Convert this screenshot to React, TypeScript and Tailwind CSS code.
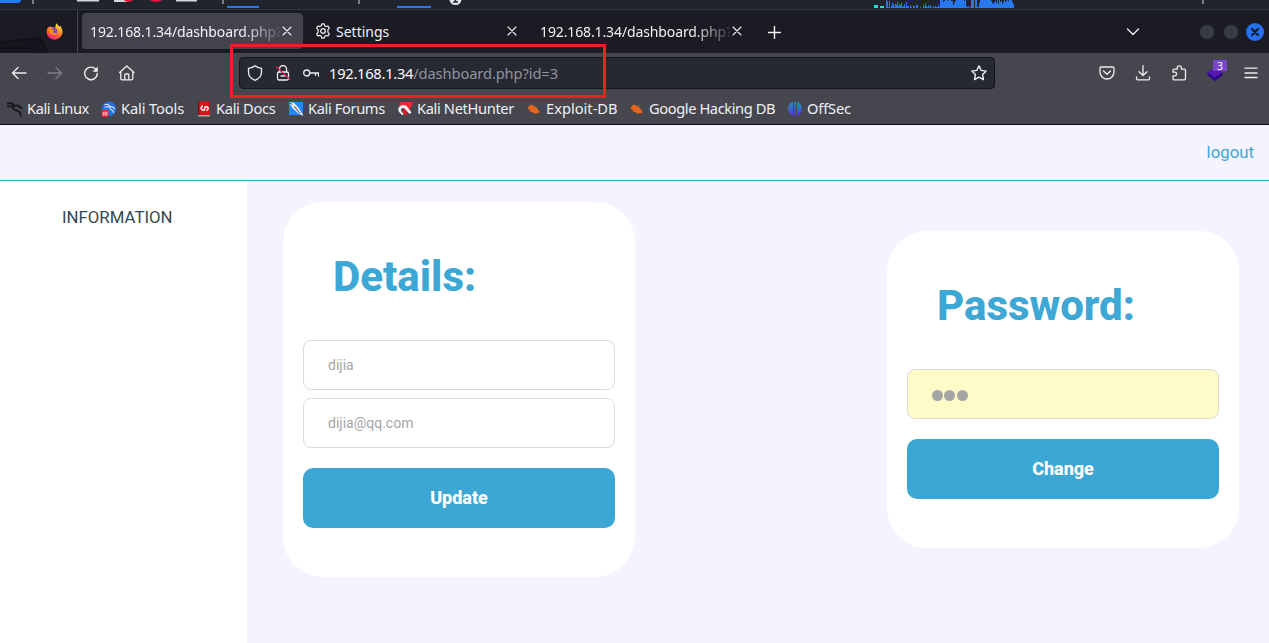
import type { ReactNode } from "react";

const line = {
  fill: "none",
  stroke: "currentColor",
  strokeWidth: 1.3,
  strokeLinecap: "round",
  strokeLinejoin: "round",
} as const;

function Icon({ children, size = 16 }: { children: ReactNode; size?: number }) {
  return (
    <svg width={size} height={size} viewBox="0 0 16 16" className="block shrink-0">
      {children}
    </svg>
  );
}

const Close = () => (
  <svg width="10" height="10" viewBox="0 0 10 10" className="block shrink-0">
    <path d="M1 1l8 8M9 1l-8 8" {...line} strokeWidth={1.1} />
  </svg>
);

const Gear = () => (
  <Icon>
    <path
      d="M6.8.8h2.4l.5 2 1.4.8 2-.6 1.3 2.2-1.5 1.5v2.6l1.5 1.5-1.3 2.2-2-.6-1.4.8-.5 2H6.8l-.5-2-1.4-.8-2 .6-1.3-2.2 1.5-1.500V6.700L1.600 5.200 2.900 3l2 .6 1.400-.8z"
      {...line}
      strokeWidth={1.2}
    />
    <circle cx="8" cy="8" r="2.3" {...line} />
  </Icon>
);

const Firefox = () => (
  <Icon size={17}>
    <defs>
      <linearGradient id="fox" x1="0.8" y1="0" x2="0.3" y2="1">
        <stop offset="0" stopColor="#fff44f" />
        <stop offset="0.4" stopColor="#ff9a2c" />
        <stop offset="0.75" stopColor="#ff4a43" />
        <stop offset="1" stopColor="#e52282" />
      </linearGradient>
    </defs>
    <path
      d="M10.2.3c.4 1.400 1.400 1.900 2.400 3 .5-.1.7-.5.7-.8 1.500 1.800 2.400 4 2.200 6.300-.4 4-3.600 6.900-7.500 6.900C3.800 15.700.6 12.500.6 8.500c0-2 .6-3.600 1.600-5l.8 1 .7-1.700 1.500 1.500c1.200-.3 2.500-.3 3.600.4C8.700 3 9 1.500 10.200.3z"
      fill="url(#fox)"
    />
    <circle cx="7.6" cy="7.8" r="3" fill="#7b42d8" />
    <path d="M3.300 6c1.600-.5 2.800.6 4.800.7-.4 1-1.600 1-2 1.800 1 1.300 3 1 4.300.4-.8 2-3 2.700-5 1.700C3.900 9.600 3.200 8 3.300 6z" fill="#ff9528" />
  </Icon>
);

const KaliLinux = () => (
  <Icon>
    <path
      d="M.8 2.600c2.800-1 5.200 0 6.400 2.200 2.300-.7 4.300-.3 5.800 1.300l1.800.8M.8 5.500c1.500-.5 3 .1 4.700.1M6.200 5c-.5 3 .7 4.300 3.500 4.600 2.700.3 3.800 2 4 5.300M12.500 6.300l-.8-1.800"
      {...line}
      stroke="#15151a"
      strokeWidth={1.8}
    />
  </Icon>
);
const KaliTools = () => (
  <Icon>
    <circle cx="8" cy="7.800" r="7.200" fill="#2470e8" />
    <path d="M4 3.500c2.500-.8 4.500.5 5 2.200 1.800-.2 3.200.5 4.500 2M4 6c1.500-.5 2.500 0 4 0M8.500 6.500c0 2.300 3.800 1.500 4 5" {...line} stroke="#d9e8ff" strokeWidth={1.1} />
    <rect x="0.5" y="9" width="7" height="7" rx="1.5" fill="#ee2634" />
    <path d="M2.400 14.500v-3.300M4 14.500v-3.300h1.800v3.300" fill="none" stroke="#ffd8da" />
  </Icon>
);
const KaliDocs = () => (
  <Icon>
    <path d="M2 1.500L3.300.5v13.800L2 15.500z" fill="#780c14" />
    <path d="M3.300.5h10.500v13.300H3.300z" fill="#e01019" />
    <path d="M2 14h11.800v1.500H2z" fill="#bda1a4" />
    <path d="M6.500 5l-1.600 2.200 1.500 1.800h2l.8-3.200H11l1.400 1.500-1.500 2" {...line} stroke="#fff" strokeWidth={1.4} />
  </Icon>
);
const KaliForums = () => (
  <Icon>
    <path d="M1 1h14v13H1z" fill="#2389ff" />
    <path d="M.5 1l5.500.8 4.500 5L15.500 15l-5-2.500L4.500 7z" fill="#f4f5f8" />
    <path d="M1 1.500l3.500 2M6 5l6 7.500" stroke="#33353d" strokeWidth="1" />
  </Icon>
);
const NetHunter = () => (
  <Icon>
    <path d="M4 1h11.500v2L10.800 12 2 4z" fill="#ee2834" />
    <path d="M2.300 11.300C.6 9.200 1 6.300 3.300 4.900c2.600-1.600 5.700-.8 7.500 1.500l3.700 5.100-2 1.400-3.800-4.300C7.300 7 5.700 6.700 4.700 7.600c-1 .8-.8 2.200 0 3.200l2 2.200-1.300 1.200z" fill="#f5f5f7" />
    <path d="M4.700 10.500l2.100-1.700 3.800 4.500-1.800 1.600z" fill="#d8202b" />
  </Icon>
);
const Exploit = () => (
  <Icon>
    <path d="M2 6.200l1.800-2.100 2.500-.3 2 1.600 1.800.3 1.300 2.100 2.300 3-.8 1.500-3-.2-.8 1-2.500-1.500L4 10.500l-.6-2L1.500 7.500z" fill="#e8641b" />
    <path d="M2.500 9.500h2M9 4.800l1.800-.7M11 12l.5 1.400" stroke="#87462c" strokeWidth=".8" />
  </Icon>
);
const OffSec = () => (
  <Icon>
    <defs>
      <linearGradient id="off" x1="0" y1="0" x2="0" y2="1">
        <stop offset="0" stopColor="#1a9aaf" />
        <stop offset="1" stopColor="#5930d0" />
      </linearGradient>
    </defs>
    <path d="M6 1v13.600C3 14 1 11 1 7.800S3 1.600 6 1zM7.200.6h1.600v14.800H7.200zM10 1c3 .6 5 3.600 5 6.800s-2 6.200-5 6.800z" fill="url(#off)" />
  </Icon>
);

const bookmarks = [
  { label: "Kali Linux", icon: <KaliLinux />, style: "w-[94px] tracking-[-0.41px]" },
  { label: "Kali Tools", icon: <KaliTools />, style: "w-[95px] tracking-[-0.12px]" },
  { label: "Kali Docs", icon: <KaliDocs />, style: "w-[92px] tracking-[-0.33px]" },
  { label: "Kali Forums", icon: <KaliForums />, style: "w-[109px] tracking-[-0.38px]" },
  { label: "Kali NetHunter", icon: <NetHunter />, style: "w-[129px] tracking-[-0.36px]" },
  { label: "Exploit-DB", icon: <Exploit />, style: "w-[103px]" },
  { label: "Google Hacking DB", icon: <Exploit />, style: "w-[158px] tracking-[-0.41px]" },
  { label: "OffSec", icon: <OffSec />, style: "w-[80px] tracking-[-0.15px]" },
];

const load = [
  8, 7, 1, 7, 0, 2, 5, 4, 1, 4, 3, 6, 2, 4, 3, 5, 1, 2, 4, 1, 6, 2, 2, 0, 3, 1, 0, 2, 2, 0, 3, 3, 0, 0, 1, 0, 0, 3, 1, 5, 2, 1, 3, 1, 3, 1, 0, 2, 1,
  2, 1, 1, 3, 1, 8, 8, 8, 6, 7, 8, 8, 8, 7, 8, 8, 7, 7, 3, 5, 7, 8, 8, 8, 8, 8, 8, 8, 8, 7, 8, 2, 1, 2, 0, 1, 8, 8, 8, 0, 8, 8, 1, 1, 5, 8, 8, 8,
  8, 8, 8, 8, 8, 8, 8, 8, 7, 5, 4, 6, 7, 5, 8, 4, 8, 6, 7, 4, 6, 8, 6, 7, 8, 7, 8, 8, 8, 6, 4,
];

function Panel() {
  return (
    <div className="h-[10px] shrink-0 border-b border-[#33353d] bg-[#22242d]">
      <svg width="1269" height="9" className="block">
        <path d="M0 0h21v1q-1 2-4 2H0z" fill="#237bff" />
        <path d="M33 0v4M223 0v4M359 0v4M1203 0v4" stroke="#969aa3" strokeWidth="1.5" />
        <path d="M77 0h22v1.500H77zM114 0h13v2h-13zM176 0h21v1.500h-21z" fill="#d5d7da" />
        <path d="M124 0h9q-2 2-5 2t-4-2zM150 0h12q-2 2-6 2t-6-2z" fill="#e2163f" />
        <path d="M227 6h32v2h-32zM397 6h34v2h-34z" fill="#2778f5" />
        <path d="M449.500 0h12q-1 5-6 5t-6-5z" fill="#e8e8eb" />
        <path d="M456 0l-2 2h4" fill="none" stroke="#202129" strokeWidth="1.3" />
        <path d="M874 5h4v3h-4zM880 6h4v2h-4z" fill="#12e7d2" />
        {load.map((h, i) => (
          <rect key={i} x={886 + i} y={8 - h} width="1" height={h} fill="#2878ed" />
        ))}
      </svg>
    </div>
  );
}

function TabTitle() {
  return (
    <span className="w-[190px] whitespace-nowrap tracking-[-0.12px] [mask-image:linear-gradient(to_right,black_152px,transparent_196px)]">
      192.168.1.34/dashboard.php?
    </span>
  );
}

function Tabs() {
  return (
    <div className="flex h-[43px] shrink-0 bg-[#1a1b23] text-[14px] text-[#f2f2f5]">
      <div className="relative flex w-[78px] items-center border-r border-[#464750] pl-[46px]">
        <svg width="77" height="43" className="absolute left-0 top-0">
          <path d="M0 32l39-4q5 4 8 15H0z" fill="#15161d" />
          <path d="M0 32l39-4q5 4 8 15M0 38h30" fill="none" stroke="#101117" strokeWidth="2" />
        </svg>
        <div className="relative">
          <Firefox />
        </div>
      </div>
      <div className="ml-1 mt-[3px] flex h-9 w-[221px] items-center rounded-[4px] bg-[#42434c] pl-2">
        <TabTitle />
        <span className="ml-[2px]"><Close /></span>
      </div>
      <div className="mt-[3px] flex h-9 w-[225px] items-center pl-3">
        <Gear />
        <span className="ml-[5px] w-[171px]">Settings</span>
        <Close />
      </div>
      <div className="mt-[3px] flex h-9 w-[224px] items-center pl-3">
        <TabTitle />
        <span className="ml-[2px]"><Close /></span>
      </div>
      <div className="flex flex-1 items-center pl-[15px]">
        <svg width="14" height="14" viewBox="0 0 14 14"><path d="M7.500 1.500v12M1.500 7.500h12" {...line} strokeWidth={1.4} /></svg>
      </div>
      <div className="flex w-[143px] items-center">
        <svg width="14" height="14" viewBox="0 0 14 14"><path d="M1.500 4L7 9.500 12.500 4" {...line} /></svg>
        <div className="ml-[59px] size-4 rounded-full border border-[#20232b] bg-[#363b48]" />
        <div className="ml-2 size-4 rounded-full border border-[#20232b] bg-[#363b48]" />
        <div className="ml-[7px] flex size-[18px] items-center justify-center rounded-full bg-[#266ff0] text-[#111827]">
          <svg width="8" height="8" viewBox="0 0 8 8"><path d="M1 1l6 6M7 1L1 7" {...line} strokeWidth={2} /></svg>
        </div>
      </div>
    </div>
  );
}

function Toolbar() {
  return (
    <div className="flex h-10 shrink-0 items-center bg-[#45464e] pl-[11px] text-[#eeeef1]">
      <div className="flex w-[228px] gap-5">
        <Icon><path d="M15 8H1.500M7 2.500L1.500 8 7 13.500" {...line} /></Icon>
        <span className="text-[#7d7e85]"><Icon><path d="M1 8h13.500M9 2.500L14.500 8 9 13.500" {...line} /></Icon></span>
        <Icon>
          <path d="M13.600 5.500A6.300 6.300 0 1 0 14.300 8.500" {...line} strokeWidth={1.4} />
          <path d="M14.800 1.500v5.300H9.500z" fill="currentColor" />
        </Icon>
        <Icon><path d="M1.800 6.300v7.200q0 1.300 1.300 1.300h9.400q1.300 0 1.300-1.300V6.300M.6 7.600L7.800 1 15 7.600M5.800 14.800V10q0-1 1-1h2q1 0 1 1v4.800" {...line} /></Icon>
      </div>
      <div className="flex h-8 w-[756px] items-center rounded-[4px] border border-[#14151b] bg-[#272932] pl-[7px]">
        <Icon><path d="M8 .7c2 1.700 4 2.200 6.500 2.600v4c0 3.700-3 6.700-6.500 8.100-3.500-1.400-6.500-4.400-6.500-8.100v-4C4 2.900 6 2.400 8 .7z" {...line} /></Icon>
        <span className="ml-3">
          <Icon>
            <rect x="2.5" y="7" width="11" height="8" rx="1.5" {...line} />
            <path d="M4.500 7V4a3.500 3.500 0 0 1 7 0v3M6 11h4" {...line} />
            <path d="M1 1.500l14 13" stroke="#e32155" strokeWidth="1.3" />
          </Icon>
        </span>
        <span className="ml-3">
          <Icon><circle cx="3.7" cy="8" r="3" {...line} /><path d="M6.700 8h8.800v3M12.500 8v2.300" {...line} /></Icon>
        </span>
        <span className="ml-[10px] flex-1 whitespace-nowrap text-[14.67px] tracking-[-0.25px] text-[#fbfbfe]">
          192.168.1.34<span className="tracking-[-0.1px] text-[#92939b]">/dashboard.php?id=3</span>
        </span>
        <span className="mr-[7px]"><Icon><path d="M8 .9l2.200 4.500 5 .7-3.600 3.500.8 5L8 12.200l-4.400 2.400.8-5L.8 6.100l5-.7z" {...line} strokeWidth={1.4} /></Icon></span>
      </div>
      <div className="ml-[104px] flex gap-5">
        <Icon><path d="M2.300 2h11.400q1.300 0 1.300 1.300V7a7 7 0 0 1-14 0V3.300Q1 2 2.300 2zM4.500 6L8 9.300 11.500 6" {...line} /></Icon>
        <Icon><path d="M8 .7v9.800M4 6.700l4 3.800 4-3.800M1.500 12v1.500q0 1.300 1.300 1.300h10.400q1.300 0 1.300-1.300V12" {...line} /></Icon>
        <Icon><path d="M2 5.500q0-1.300 1.300-1.300h2.900V3a2.100 2.100 0 0 1 4.200 0v1.200h3.100q1 0 1 1v8.300q0 1.300-1.200 1.300H3.300Q2 14.800 2 13.500v-2.700h1.800a1.800 1.800 0 0 0 0-3.600H2z" {...line} /></Icon>
        <div className="relative">
          <Icon><path d="M8 2l7.500 5.500L8 13 .5 7.500z" fill="#5618b0" /><path d="M.5 7.500L8 12.500l7.500-5v2.800L8 16 .5 10.300z" fill="#2b058c" /></Icon>
          <span className="absolute left-[6px] top-[-5px] flex h-[11px] w-[14px] items-center justify-center bg-[#7945cc] text-[10px] leading-none text-white">3</span>
        </div>
        <Icon><path d="M2 3.200h12M2 8h12M2 12.500h12" {...line} /></Icon>
      </div>
    </div>
  );
}

function Heading({ children }: { children: ReactNode }) {
  return <h1 className="pl-[30px] text-[42px] font-extrabold leading-[50px] text-[#3da7d5]">{children}</h1>;
}

function Submit({ children }: { children: ReactNode }) {
  return <button className="mt-5 h-[60px] w-full rounded-[10px] bg-[#3ca7d5] pb-0.5 text-[18px] font-extrabold text-white">{children}</button>;
}

export default function App() {
  return (
    <div className="relative flex h-[643px] w-[1269px] flex-col overflow-hidden bg-[#f5f3fe] font-['Noto_Sans',sans-serif]">
      <Panel />
      <Tabs />
      <Toolbar />
      <div className="flex h-8 shrink-0 items-center border-b border-[#0d0e14] bg-[#45464e] pl-[7px] text-[14.67px] text-[#f0f0f3]">
        {bookmarks.map((b) => (
          <div key={b.label} className={`flex shrink-0 items-center gap-1 whitespace-nowrap ${b.style}`}>
            {b.icon}
            <span className="pb-0.5">{b.label}</span>
          </div>
        ))}
      </div>
      <header className="flex h-14 shrink-0 items-center justify-end border-b border-[#3da7d5] pr-[15px] font-['Roboto',sans-serif] text-[16.8px] text-[#3da7d5]">
        logout
      </header>
      <div className="flex flex-1 font-['Roboto',sans-serif]">
        <aside className="w-[247px] bg-white pl-[62px] pt-[26px] text-[16.8px] leading-5 text-[#36474f]">INFORMATION</aside>
        <main className="flex flex-1 items-start justify-between pl-9 pr-[30px] pt-[21px]">
          <section className="h-[375px] w-[352px] rounded-[40px] bg-white px-5 pt-[50px]">
            <Heading>Details:</Heading>
            <div className="mt-[38px] flex flex-col gap-2 text-[14px] text-[#a5a5a5]">
              <div className="flex h-[50px] items-center rounded-lg border border-[#dadae3] pl-6">dijia</div>
              <div className="flex h-[50px] items-center rounded-lg border border-[#dadae3] pl-6">dijia@qq.com</div>
            </div>
            <Submit>Update</Submit>
          </section>
          <section className="mt-[29px] h-[317px] w-[352px] rounded-[40px] bg-white px-5 pt-[50px]">
            <Heading>Password:</Heading>
            <div className="mt-[38px] flex h-[50px] items-center gap-[1.3px] rounded-lg border border-[#dadad8] bg-[#fffbc9] pl-6 pt-[2px]">
              <span className="size-[11px] rounded-full bg-[#a5a5a5]" />
              <span className="size-[11px] rounded-full bg-[#a5a5a5]" />
              <span className="size-[11px] rounded-full bg-[#a5a5a5]" />
            </div>
            <Submit>Change</Submit>
          </section>
        </main>
      </div>
      <div className="absolute left-[230px] top-[44px] h-[54px] w-[376px] border-[3px] border-[#ee2026]" />
    </div>
  );
}
